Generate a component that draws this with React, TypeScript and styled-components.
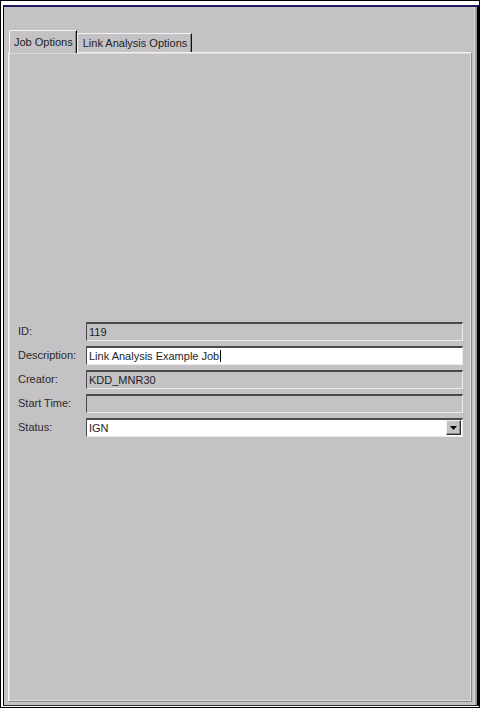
import React from "react";
import styled, { createGlobalStyle } from "styled-components";

const GlobalStyle = createGlobalStyle`
  html, body { margin: 0; padding: 0; background: #ffffff; }
  * { box-sizing: border-box; }
`;

const BG = "#c4c2c4";

const Outer = styled.div`
  width: 480px;
  height: 708px;
  border: 1px solid #000;
  background: #fff;
  padding: 4px 0 1px 2px;
  display: flex;
  font-family: "Liberation Sans", Arial, sans-serif;
  font-size: 11px;
  color: #1e1e1e;
`;

const Window = styled.div`
  flex: 1;
  display: flex;
  flex-direction: column;
  background: ${BG};
  border-top: 2px solid #1c1c5e;
  border-left: 1px solid #000;
  border-right: 2px solid #000;
  border-bottom: 1px solid #2a2a2a;
  box-shadow: inset -2px 0 0 #9c9a9c, inset -3px 0 0 #dcdadc;
  padding: 23px 5px 3px 4px;
`;

const TabRow = styled.div`
  display: flex;
  align-items: flex-end;
  height: 22px;
  padding-left: 1px;
  position: relative;
  z-index: 1;
`;

const Tab = styled.div<{ $active?: boolean }>`
  height: ${(p) => (p.$active ? "23px" : "19px")};
  margin-bottom: ${(p) => (p.$active ? "-1px" : "0")};
  padding: ${(p) => (p.$active ? "0 3px 0 4px" : "0 4px 0 5px")};
  display: flex;
  align-items: ${(p) => (p.$active ? "flex-start" : "center")};
  padding-top: ${(p) => (p.$active ? "5px" : "0")};
  background: ${BG};
  border-top: 1px solid #f4f4f4;
  border-left: 1px solid #f4f4f4;
  border-right: 1px solid #111;
  box-shadow: inset -1px 0 0 #8a888a;
  border-top-left-radius: 2px;
  white-space: nowrap;
  color: #1e1e1e;
`;

const Panel = styled.div`
  flex: 1;
  display: flex;
  flex-direction: column;
  justify-content: center;
  border-top: 1px solid #f4f4f4;
  border-left: 1px solid #f4f4f4;
  border-right: 1px solid #8a888a;
  border-bottom: 1px solid #8a888a;
  box-shadow: inset 1px 1px 0 #dcdadc, inset -1px -1px 0 #dcdadc;
  padding: 0 8px 0 9px;
`;

const Form = styled.div`
  display: flex;
  flex-direction: column;
  gap: 5px;
  margin-top: 4px;
`;

const Row = styled.div`
  display: grid;
  grid-template-columns: 68px 1fr;
  align-items: center;
  height: 19px;
`;

const Label = styled.span`
  color: #2a2a2a;
  white-space: nowrap;
`;

const Field = styled.div<{ $editable?: boolean }>`
  height: 19px;
  display: flex;
  align-items: center;
  padding-left: 2px;
  background: ${(p) => (p.$editable ? "#ffffff" : BG)};
  border-top: 2px solid #4a4a4a;
  border-left: 1px solid #4a4a4a;
  border-right: 1px solid #ececec;
  border-bottom: 1px solid #ececec;
  white-space: nowrap;
  overflow: hidden;
  color: #1e1e1e;
`;

const Caret = styled.span`
  display: inline-block;
  width: 1px;
  height: 12px;
  background: #000;
  margin-left: 1px;
`;

const Combo = styled.div`
  height: 19px;
  display: flex;
  align-items: center;
  background: #fff;
  border-top: 2px solid #4a4a4a;
  border-left: 1px solid #4a4a4a;
  border-right: 1px solid #ececec;
  border-bottom: 1px solid #ececec;
`;

const ComboText = styled.span`
  flex: 1;
  padding-left: 2px;
`;

const ComboButton = styled.div`
  width: 15px;
  height: 15px;
  margin-right: 1px;
  background: ${BG};
  border-top: 1px solid #f0f0f0;
  border-left: 1px solid #f0f0f0;
  border-right: 1px solid #2a2a2a;
  border-bottom: 1px solid #2a2a2a;
  box-shadow: inset -1px -1px 0 #8a888a;
  display: flex;
  align-items: center;
  justify-content: center;
`;

const rows = [
  { label: "ID:", value: "119" },
  { label: "Description:", value: "Link Analysis Example Job", editable: true },
  { label: "Creator:", value: "KDD_MNR30" },
  { label: "Start Time:", value: "" },
];

export default function App() {
  return (
    <>
      <GlobalStyle />
      <Outer>
        <Window>
          <TabRow>
            <Tab $active>Job Options</Tab>
            <Tab>Link Analysis Options</Tab>
          </TabRow>
          <Panel>
            <Form>
              {rows.map((r) => (
                <Row key={r.label}>
                  <Label>{r.label}</Label>
                  <Field $editable={r.editable}>
                    {r.value}
                    {r.editable && <Caret />}
                  </Field>
                </Row>
              ))}
              <Row>
                <Label>Status:</Label>
                <Combo>
                  <ComboText>IGN</ComboText>
                  <ComboButton>
                    <svg width="7" height="4" viewBox="0 0 7 4">
                      <polygon points="0,0 7,0 3.5,4" fill="#000" />
                    </svg>
                  </ComboButton>
                </Combo>
              </Row>
            </Form>
          </Panel>
        </Window>
      </Outer>
    </>
  );
}
